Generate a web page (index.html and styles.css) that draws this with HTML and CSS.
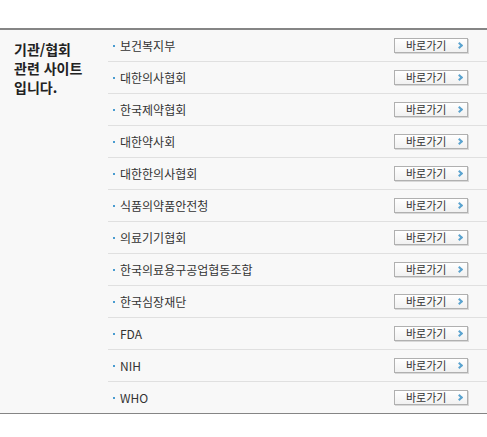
FILE: index.html
```html
<!DOCTYPE html>
<html lang="ko">
<head>
<meta charset="utf-8">
<link rel="stylesheet" href="styles.css">
</head>
<body>
<div class="box">
  <div class="title">기관/협회<br>관련 사이트<br>입니다.</div>
  <ul class="list">
    <li><span class="name">보건복지부</span><a class="go" href="#">바로가기<i class="arr"></i></a></li>
    <li><span class="name">대한의사협회</span><a class="go" href="#">바로가기<i class="arr"></i></a></li>
    <li><span class="name">한국제약협회</span><a class="go" href="#">바로가기<i class="arr"></i></a></li>
    <li><span class="name">대한약사회</span><a class="go" href="#">바로가기<i class="arr"></i></a></li>
    <li><span class="name">대한한의사협회</span><a class="go" href="#">바로가기<i class="arr"></i></a></li>
    <li><span class="name">식품의약품안전청</span><a class="go" href="#">바로가기<i class="arr"></i></a></li>
    <li><span class="name">의료기기협회</span><a class="go" href="#">바로가기<i class="arr"></i></a></li>
    <li><span class="name">한국의료용구공업협동조합</span><a class="go" href="#">바로가기<i class="arr"></i></a></li>
    <li><span class="name">한국심장재단</span><a class="go" href="#">바로가기<i class="arr"></i></a></li>
    <li><span class="name">FDA</span><a class="go" href="#">바로가기<i class="arr"></i></a></li>
    <li><span class="name">NIH</span><a class="go" href="#">바로가기<i class="arr"></i></a></li>
    <li><span class="name">WHO</span><a class="go" href="#">바로가기<i class="arr"></i></a></li>
  </ul>
</div>
</body>
</html>
```
FILE: styles.css
```css
html, body { margin: 0; padding: 0; background: #fff; }
body { font-family: "Noto Sans CJK KR", "Noto Sans", sans-serif; color: #333; }
.box {
  margin-top: 28px;
  display: flex;
  background: #f8f8f8;
  border-top: 2px solid #858585;
  border-bottom: 1px solid #858585;
}
.title {
  width: 94px;
  padding: 10px 0 0 14px;
  font-size: 14px;
  font-weight: bold;
  line-height: 19px;
  color: #222;
}
.list { flex: 1; margin: 0; padding: 0; list-style: none; }
.list li {
  height: 31px;
  display: flex;
  align-items: center;
  justify-content: space-between;
  border-top: 1px solid #e0e0e0;
  padding: 0 19px 0 5px;
}
.list li:first-child { border-top: 0; }
.name {
  display: flex;
  align-items: center;
  font-size: 12px;
  color: #333;
}
.name::before {
  content: "";
  width: 2px;
  height: 2px;
  background: #4a9cd0;
  margin-right: 5px;
}
.go {
  box-sizing: border-box;
  width: 74px;
  height: 15px;
  display: flex;
  align-items: center;
  padding-left: 11px;
  border: 1px solid #b0b0b0;
  background: linear-gradient(#ffffff, #f1f1f1);
  box-shadow: 1px 1px 0 #d8d8d8;
  font-size: 11px;
  line-height: 13px;
  color: #333;
  text-decoration: none;
}
.arr {
  margin-left: 11px;
  width: 3px;
  height: 3px;
  border-top: 2px solid #5ba3cf;
  border-right: 2px solid #5ba3cf;
  transform: rotate(45deg);
}
```
